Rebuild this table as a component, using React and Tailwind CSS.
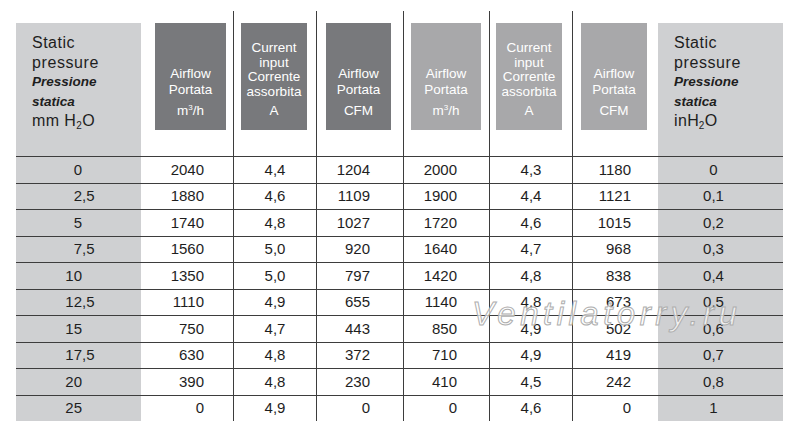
import React from "react";

const rows = [
  ["0", "2040", "4,4", "1204", "2000", "4,3", "1180", "0"],
  ["2,5", "1880", "4,6", "1109", "1900", "4,4", "1121", "0,1"],
  ["5", "1740", "4,8", "1027", "1720", "4,6", "1015", "0,2"],
  ["7,5", "1560", "5,0", "920", "1640", "4,7", "968", "0,3"],
  ["10", "1350", "5,0", "797", "1420", "4,8", "838", "0,4"],
  ["12,5", "1110", "4,9", "655", "1140", "4,8", "673", "0,5"],
  ["15", "750", "4,7", "443", "850", "4,9", "502", "0,6"],
  ["17,5", "630", "4,8", "372", "710", "4,9", "419", "0,7"],
  ["20", "390", "4,8", "230", "410", "4,5", "242", "0,8"],
  ["25", "0", "4,9", "0", "0", "4,6", "0", "1"],
];

const font = { fontFamily: '"Liberation Sans", Arial, sans-serif' };

function SideHeader({ unit }) {
  return (
    <div className="h-full pt-[12px]">
      <div className="h-full bg-[#cfd0d2] pl-[16px] pt-[10px] text-[#1e1e1e]">
        <div className="text-[16px] leading-[19.5px] tracking-[0.5px]">Static</div>
        <div className="text-[16px] leading-[19.5px] tracking-[0.6px]">pressure</div>
        <div className="text-[13.5px] leading-[20px] font-bold italic">Pressione</div>
        <div className="text-[13.5px] leading-[19px] font-bold italic">statica</div>
        <div className="text-[16px] leading-[19.5px] tracking-[0.4px]">{unit}</div>
      </div>
    </div>
  );
}

function AirBox({ color, ml, w, unit }) {
  return (
    <div className="pt-[12px]">
      <div
        className={`${color} ${ml} ${w} h-[107px] flex flex-col items-center justify-end pb-[11px] text-white text-[13.5px]`}
      >
        <div className="leading-[16px]">Airflow</div>
        <div className="leading-[16px]">Portata</div>
        <div className="leading-[16px] mt-[5px]">{unit}</div>
      </div>
    </div>
  );
}

function CurBox({ color, ml, w }) {
  return (
    <div className="pt-[12px]">
      <div
        className={`${color} ${ml} ${w} h-[107px] flex flex-col items-center justify-end pb-[11px] text-white text-[13.5px]`}
      >
        <div className="leading-[14.5px]">Current</div>
        <div className="leading-[14.5px]">input</div>
        <div className="leading-[14.5px]">Corrente</div>
        <div className="leading-[14.5px]">assorbita</div>
        <div className="leading-[16px] mt-[4px]">A</div>
      </div>
    </div>
  );
}

function FirstCell({ v }) {
  const [a, b] = v.split(",");
  return (
    <div className="flex h-full items-center bg-[#cfd0d2]">
      <span className="w-[66px] text-right">{a}</span>
      {b !== undefined && <span>,{b}</span>}
    </div>
  );
}

export default function App() {
  const line = "border-[#3d3d3d]";
  return (
    <div className="relative w-[800px] h-[438px] bg-white overflow-hidden" style={font}>
      <div className="pl-[16px] pt-[11px]">
        <div className="grid grid-cols-[125px_92px_83px_87px_86px_83px_86px_125px]">
          {/* header */}
          <div className="h-[145px]">
            <SideHeader
              unit={
                <span>
                  mm H<sub className="text-[10px]">2</sub>O
                </span>
              }
            />
          </div>
          <AirBox color="bg-[#78797c]" ml="ml-[14px]" w="w-[71px]" unit={<span>m<sup className="text-[8px] -top-[5px]">3</sup>/h</span>} />
          <div className={`border-l ${line}`}>
            <CurBox color="bg-[#78797c]" ml="ml-[7px]" w="w-[66px]" />
          </div>
          <div className={`border-l ${line}`}>
            <AirBox color="bg-[#78797c]" ml="ml-[9px]" w="w-[65px]" unit="CFM" />
          </div>
          <div className={`border-l ${line}`}>
            <AirBox color="bg-[#a8a8aa]" ml="ml-[7px]" w="w-[70px]" unit={<span>m<sup className="text-[8px] -top-[5px]">3</sup>/h</span>} />
          </div>
          <div className={`border-l ${line}`}>
            <CurBox color="bg-[#a8a8aa]" ml="ml-[6px]" w="w-[66px]" />
          </div>
          <div className={`border-l ${line}`}>
            <AirBox color="bg-[#a8a8aa]" ml="ml-[8px]" w="w-[66px]" unit="CFM" />
          </div>
          <div className="h-[145px]">
            <SideHeader
              unit={
                <span>
                  in<span className="tracking-normal">H</span><sub className="text-[10px]">2</sub>O
                </span>
              }
            />
          </div>

          {/* data */}
          {rows.map((r, i) => (
            <React.Fragment key={i}>
              <div className={`h-[26.5px] border-t ${line} text-[15px] text-[#1e1e1e]`}>
                <FirstCell v={r[0]} />
              </div>
              <div className={`h-[26.5px] border-t ${line} text-[15px] text-[#1e1e1e] flex items-center justify-end pr-[29px]`}>
                {r[1]}
              </div>
              <div className={`h-[26.5px] border-t border-l ${line} text-[15px] text-[#1e1e1e] flex items-center justify-center`}>
                {r[2]}
              </div>
              <div className={`h-[26.5px] border-t border-l ${line} text-[15px] text-[#1e1e1e] flex items-center justify-end pr-[33px]`}>
                {r[3]}
              </div>
              <div className={`h-[26.5px] border-t border-l ${line} text-[15px] text-[#1e1e1e] flex items-center justify-end pr-[32px]`}>
                {r[4]}
              </div>
              <div className={`h-[26.5px] border-t border-l ${line} text-[15px] text-[#1e1e1e] flex items-center justify-center`}>
                {r[5]}
              </div>
              <div className={`h-[26.5px] border-t border-l ${line} text-[15px] text-[#1e1e1e] flex items-center justify-end pr-[27px]`}>
                {r[6]}
              </div>
              <div className={`h-[26.5px] border-t ${line} bg-[#cfd0d2] text-[15px] text-[#1e1e1e] flex items-center justify-center pr-[14px]`}>
                {r[7]}
              </div>
            </React.Fragment>
          ))}
        </div>
      </div>

      {/* watermark */}
      <div
        className="absolute left-[472px] top-[298px] text-[33px] leading-[32px] italic tracking-[4.5px] text-[rgba(255,255,255,0.7)] [-webkit-text-stroke:1px_#aeaeae] pointer-events-none whitespace-nowrap"
      >
        Ventilatorry.ru
      </div>
    </div>
  );
}
